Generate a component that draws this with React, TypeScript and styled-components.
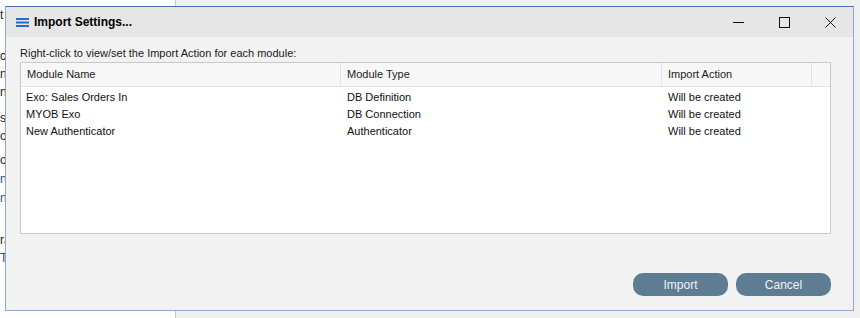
import styled, { createGlobalStyle } from 'styled-components';

type Module = { name: string; type: string; action: string };

const modules: Module[] = [
  { name: 'Exo: Sales Orders In', type: 'DB Definition', action: 'Will be created' },
  { name: 'MYOB Exo', type: 'DB Connection', action: 'Will be created' },
  { name: 'New Authenticator', type: 'Authenticator', action: 'Will be created' },
];

// bits of the page behind the dialog, only their first letters show
const behind = [
  { text: 't', gap: 9, blue: false },
  { text: 'ct', gap: 28, blue: false },
  { text: 'ne', gap: 5, blue: false },
  { text: 'ne', gap: 5, blue: false },
  { text: 's', gap: 13, blue: false },
  { text: 'or', gap: 5, blue: false },
  { text: 'o', gap: 11, blue: false },
  { text: 'ni', gap: 6, blue: true },
  { text: 'ni', gap: 6, blue: true },
  { text: 'ra', gap: 29, blue: false },
  { text: 'T', gap: 5, blue: true },
];

const App = () => {
  return (
    <>
      <GlobalStyle />
      <Desktop>
        <LeftPane>
          {behind.map((b, i) => (
            <Fragment key={i} $gap={b.gap} $blue={b.blue}>
              {b.text}
            </Fragment>
          ))}
        </LeftPane>
        <RightPane />

        <Dialog>
          <TitleBar>
            <AppIcon width="13" height="9" viewBox="0 0 13 9">
              <rect x="0" y="0" width="13" height="2" fill="#1f6fc5" />
              <rect x="0" y="3.5" width="13" height="2" fill="#1f6fc5" />
              <rect x="0" y="7" width="13" height="2" fill="#1f6fc5" />
            </AppIcon>
            <Title>Import Settings...</Title>
            <Controls>
              <ControlButton aria-label="Minimize">
                <svg width="11" height="11" viewBox="0 0 11 11">
                  <line x1="0" y1="5.5" x2="11" y2="5.5" stroke="#111" strokeWidth="1" />
                </svg>
              </ControlButton>
              <ControlButton aria-label="Maximize">
                <svg width="11" height="11" viewBox="0 0 11 11">
                  <rect x="0.5" y="0.5" width="10" height="10" fill="none" stroke="#111" strokeWidth="1" />
                </svg>
              </ControlButton>
              <ControlButton aria-label="Close">
                <svg width="11" height="11" viewBox="0 0 11 11">
                  <path d="M0.5 0.5 L10.5 10.5 M10.5 0.5 L0.5 10.5" stroke="#111" strokeWidth="1" />
                </svg>
              </ControlButton>
            </Controls>
          </TitleBar>

          <Body>
            <Hint>Right-click to view/set the Import Action for each module:</Hint>
            <Table>
              <HeaderRow>
                <HeaderCell $width={320}>Module Name</HeaderCell>
                <HeaderCell $width={321}>Module Type</HeaderCell>
                <HeaderCell $width={150}>Import Action</HeaderCell>
                <HeaderCell $width={0} $last />
              </HeaderRow>
              {modules.map((m) => (
                <Row key={m.name}>
                  <Cell $width={321}>{m.name}</Cell>
                  <Cell $width={321}>{m.type}</Cell>
                  <Cell $width={150}>{m.action}</Cell>
                </Row>
              ))}
            </Table>
            <Footer>
              <Button>Import</Button>
              <Button>Cancel</Button>
            </Footer>
          </Body>
        </Dialog>
      </Desktop>
    </>
  );
};

const GlobalStyle = createGlobalStyle`
  html, body {
    margin: 0;
    padding: 0;
    width: 860px;
    height: 318px;
    overflow: hidden;
    background: #ffffff;
  }
  body {
    font-family: "Liberation Sans", Arial, sans-serif;
    font-size: 11px;
    color: #1a1a1a;
  }
  * {
    box-sizing: border-box;
  }
`;

const Desktop = styled.div`
  position: relative;
  width: 860px;
  height: 318px;
  display: flex;
  overflow: hidden;
`;

const LeftPane = styled.div`
  width: 176px;
  background: #ffffff;
  border-right: 1px solid #c9c9c9;
  display: flex;
  flex-direction: column;
  font-size: 12px;
  line-height: 13px;
`;

const Fragment = styled.div<{ $gap: number; $blue: boolean }>`
  margin-top: ${(p) => p.$gap}px;
  color: ${(p) => (p.$blue ? '#1f4e8c' : '#222')};
`;

const RightPane = styled.div`
  flex: 1;
  background: #f0f0f0;
`;

const Dialog = styled.div`
  position: absolute;
  left: 5px;
  top: 6px;
  width: 849px;
  height: 305px;
  display: flex;
  flex-direction: column;
  background: #f2f2f2;
  border: 1px solid #8ea8d6;
  border-top: 1px solid #4c6fa9;
`;

const TitleBar = styled.div`
  height: 30px;
  display: flex;
  align-items: center;
  background: #e6e6e6;
  padding-left: 10px;
`;

const AppIcon = styled.svg`
  display: block;
  margin-right: 5px;
  margin-top: 1px;
`;

const Title = styled.div`
  font-size: 12px;
  font-weight: bold;
  color: #000;
`;

const Controls = styled.div`
  margin-left: auto;
  display: flex;
  height: 100%;
`;

const ControlButton = styled.div`
  width: 46px;
  height: 30px;
  display: flex;
  align-items: center;
  justify-content: center;

  & svg {
    display: block;
  }
`;

const Body = styled.div`
  flex: 1;
  display: flex;
  flex-direction: column;
  padding: 8px 22px 14px 14px;
`;

const Hint = styled.div`
  height: 16px;
  line-height: 16px;
  margin-bottom: 1px;
`;

const Table = styled.div`
  width: 811px;
  height: 172px;
  background: #ffffff;
  border: 1px solid #c8c8c8;
  display: flex;
  flex-direction: column;
`;

const HeaderRow = styled.div`
  display: flex;
  height: 24px;
  background: #f7f7f7;
  border-bottom: 1px solid #e3e3e3;
  margin-bottom: 2px;
`;

const HeaderCell = styled.div<{ $width: number; $last?: boolean }>`
  ${(p) => (p.$last ? 'flex: 1;' : `width: ${p.$width}px;`)}
  padding-left: 6px;
  line-height: 23px;
  color: #222;
  border-right: ${(p) => (p.$last ? 'none' : '1px solid #e3e3e3')};
`;

const Row = styled.div`
  display: flex;
  height: 17px;
  line-height: 17px;
`;

const Cell = styled.div<{ $width: number }>`
  width: ${(p) => p.$width}px;
  padding-left: 5px;
  color: #111;
  white-space: nowrap;
`;

const Footer = styled.div`
  margin-top: auto;
  display: flex;
  justify-content: flex-end;
  gap: 8px;
`;

const Button = styled.div`
  width: 95px;
  height: 23px;
  border-radius: 10px;
  background: #5e7c92;
  color: #f2f2f2;
  display: flex;
  align-items: center;
  justify-content: center;
  font-size: 12px;
`;

export default App;
